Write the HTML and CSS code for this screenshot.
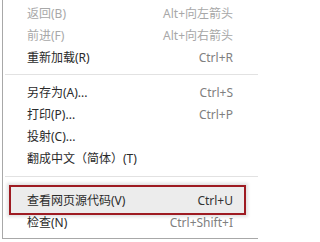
FILE: index.html
```html
<!DOCTYPE html>
<html>
<head>
<meta charset="utf-8">
<link rel="stylesheet" href="styles.css">
</head>
<body>
<div class="menu">
  <div class="item disabled"><span>返回(B)</span><span class="key">Alt+向左箭头</span></div>
  <div class="item disabled"><span>前进(F)</span><span class="key">Alt+向右箭头</span></div>
  <div class="item"><span>重新加载(R)</span><span class="key">Ctrl+R</span></div>
  <div class="sep"></div>
  <div class="item"><span>另存为(A)...</span><span class="key">Ctrl+S</span></div>
  <div class="item"><span>打印(P)...</span><span class="key">Ctrl+P</span></div>
  <div class="item"><span>投射(C)...</span></div>
  <div class="item"><span>翻成中文（简体）(T)</span></div>
  <div class="sep sep2"></div>
  <div class="item selected"><span>查看网页源代码(V)</span><span class="key">Ctrl+U</span></div>
  <div class="item"><span>检查(N)</span><span class="key">Ctrl+Shift+I</span></div>
</div>
</body>
</html>
```
FILE: styles.css
```css
html, body {
  margin: 0;
  padding: 0;
  background: #ffffff;
}
body {
  font-family: "Noto Sans", "Noto Sans CJK SC", sans-serif;
  font-size: 12px;
  color: #2a2a2a;
}
.menu {
  margin-left: 2px;
  width: 256px;
  height: 239px;
  border-left: 1px solid #a8a8a8;
  border-bottom: 1px solid #a8a8a8;
  padding-top: 2px;
  box-sizing: border-box;
  overflow: hidden;
}
.item {
  display: flex;
  justify-content: space-between;
  align-items: center;
  height: 22px;
  padding: 0 25px 0 24px;
  white-space: nowrap;
}
.key {
  color: #808080;
}
.disabled, .disabled .key {
  color: #a8a8a8;
}
.sep {
  height: 1px;
  background: #e2e2e2;
  margin: 6px 0 6px 2px;
}
.sep2 {
  margin: 7px 0 10px 2px;
}
.selected {
  margin: 0 12px 0 6px;
  height: 26px;
  padding: 0 11px 0 16px;
  border: 2px solid #9e1b22;
  background: #ececec;
  box-shadow: 0 0 3px 2px rgba(0, 0, 0, 0.12);
  position: relative;
  top: -2px;
  margin-bottom: -6px;
}
.selected .key {
  color: #333333;
}
```
